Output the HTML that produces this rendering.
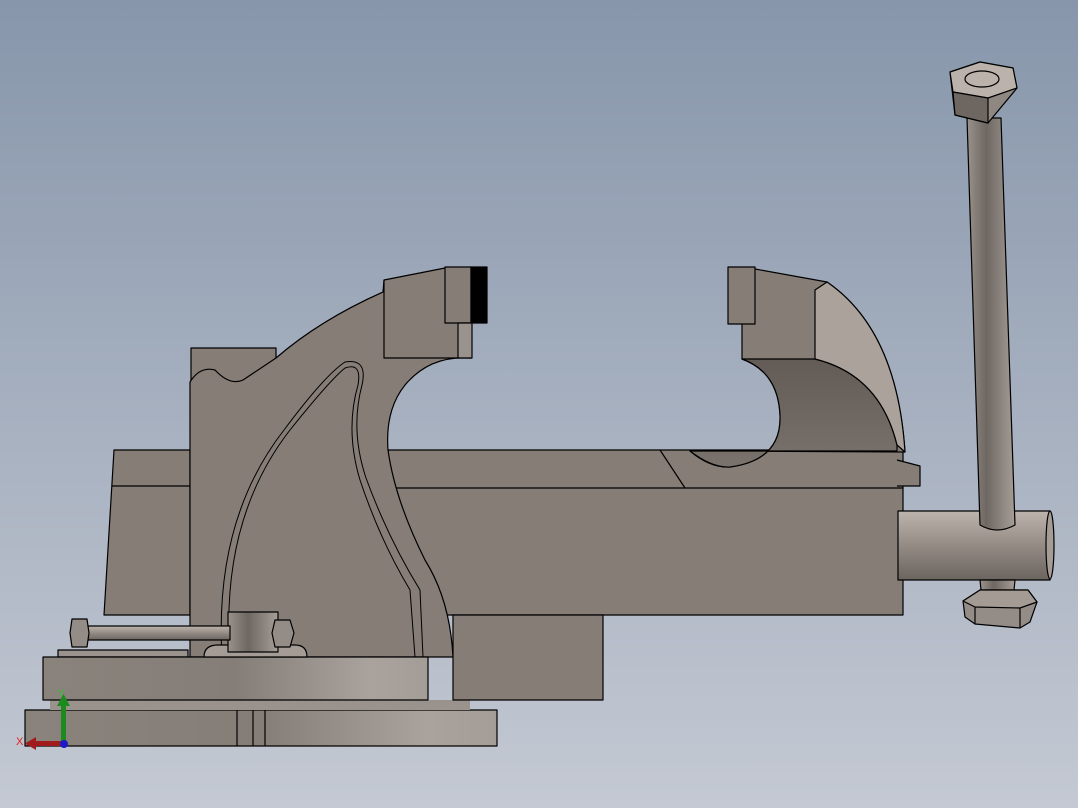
<!DOCTYPE html>
<html><head><style>html,body{margin:0;padding:0;width:1078px;height:808px;overflow:hidden}svg{display:block}</style></head>
<body>
<svg width="1078" height="808" viewBox="0 0 1078 808" xmlns="http://www.w3.org/2000/svg" font-family="Liberation Sans, sans-serif">
<defs>
<linearGradient id="bg" x1="0" y1="0" x2="0" y2="1"><stop offset="0" stop-color="#8796ab"/><stop offset="1" stop-color="#c4c9d3"/></linearGradient>
<linearGradient id="base" x1="0" y1="0" x2="1" y2="0"><stop offset="0" stop-color="#8a837c"/><stop offset="0.5" stop-color="#857e78"/><stop offset="0.85" stop-color="#aaa39d"/><stop offset="1" stop-color="#a49d97"/></linearGradient>
<linearGradient id="cyl" x1="0" y1="0" x2="0" y2="1"><stop offset="0" stop-color="#bdb4ad"/><stop offset="0.5" stop-color="#948b85"/><stop offset="1" stop-color="#6b645f"/></linearGradient>
<linearGradient id="rod" x1="0" y1="0" x2="1" y2="0"><stop offset="0" stop-color="#9a928b"/><stop offset="0.4" stop-color="#6e6762"/><stop offset="1" stop-color="#a69e97"/></linearGradient>
<linearGradient id="cheek" x1="0" y1="0" x2="0" y2="1"><stop offset="0" stop-color="#625b56"/><stop offset="1" stop-color="#7a726c"/></linearGradient>
</defs>
<rect width="1078" height="808" fill="url(#bg)"/>
<g stroke="#000" stroke-width="1.2" stroke-linejoin="round">
<rect x="25" y="710" width="472" height="36" fill="url(#base)"/>
<rect x="50" y="700" width="420" height="10" fill="#9a938d" stroke="none"/>
<line x1="237" y1="710" x2="237" y2="746"/><line x1="253" y1="710" x2="253" y2="746"/><line x1="265" y1="710" x2="265" y2="746"/>
<path d="M114 450 L190 450 L190 615 L104 615 Z" fill="#857d76"/>
<line x1="112" y1="486" x2="190" y2="486"/>
<rect x="388" y="450" width="515" height="165" fill="#857d76"/>
<line x1="388" y1="488" x2="903" y2="488"/>
<path d="M660 450 L685 488" fill="none"/>
<path d="M897 460 L920 466 L920 486 L897 486" fill="#857d76"/>
<rect x="453" y="615" width="150" height="85" fill="#857d76"/>
<path d="M690 451 Q710 468 730 467 Q782 460 780 415 Q778 372 742 359 L742 269 L755 269 L827 282 Q897 330 905 452 Z" fill="#857d76"/>
<path d="M742 359 L815 359 Q880 375 897 445 L897 451 L690 451 Q712 468 730 467 Q782 460 780 415 Q778 372 742 359Z" fill="url(#cheek)"/>
<path d="M815 290 L815 359 Q880 375 897 445 L905 452 Q897 330 827 282 Z" fill="#aaa29b"/>
<rect x="728" y="267" width="27" height="57" fill="#857d76"/>
<rect x="191" y="348" width="85" height="40" fill="#857d76"/>
<path d="M190 382 Q200 366 215 370 Q230 386 243 380 L276 358 Q320 320 383 292 L384 280 L445 268 L471 268 L471 358 Q430 355 405 385 Q385 410 388 450 Q395 500 425 560 Q450 600 453 657 L190 657 Z" fill="#857d76"/>
<path d="M384 280 L384 358 L471 358" fill="none"/>
<path d="M230 657 Q220 520 290 430 Q330 380 345 368 Q362 362 358 385 Q345 430 360 480 Q380 540 410 590 L415 657" fill="none" stroke-width="1"/>
<path d="M222 657 Q214 520 284 430 Q325 375 345 362 Q368 358 362 385 Q350 430 366 478 Q388 538 420 590 L423 657" fill="none" stroke-width="1"/>
<rect x="445" y="267" width="26" height="56" fill="#857d76"/>
<rect x="471" y="267" width="16" height="56" fill="#000"/>
<rect x="458" y="323" width="14" height="35" fill="#9a928c"/>
<rect x="58" y="650" width="130" height="7" fill="#9a928c"/>
<rect x="43" y="657" width="385" height="43" fill="url(#base)"/>
<path d="M204 657 Q204 645 218 645 L295 645 Q307 645 307 657 Z" fill="#a49c95"/>
<rect x="228" y="612" width="50" height="40" fill="url(#rod)"/>
<rect x="86" y="626" width="144" height="14" fill="url(#cyl)"/>
<path d="M72 619 L87 619 L89 633 L87 647 L72 647 L70 633 Z" fill="#948c86"/>
<path d="M275 620 L290 620 L294 633 L290 647 L275 647 L272 633 Z" fill="#948c86"/>
<rect x="898" y="511" width="152" height="69" fill="url(#cyl)"/>
<ellipse cx="1050" cy="545" rx="4" ry="34" fill="#a49c95"/>
<path d="M967 118 L1001 118 L1015 525 Q997 535 980 525 Z" fill="url(#rod)"/>
<path d="M980 580 L1015 580 L1013 600 L982 600 Z" fill="url(#rod)"/>
<path d="M950 72 L980 62 L1013 68 L1017 88 L988 123 L955 115 Z" fill="#8f8781"/>
<path d="M950 72 L980 62 L1013 68 L1017 88 L988 98 L953 92 Z" fill="#bbb2ab"/>
<path d="M953 92 L988 98 L988 123 L955 115 Z" fill="#6d6661"/>
<ellipse cx="982" cy="79" rx="17" ry="8" fill="none"/>
<path d="M963 601 L980 590 L1028 590 L1037 602 L1030 622 L1020 628 L975 624 L965 617 Z" fill="#948c86"/>
<path d="M963 601 L980 590 L1028 590 L1037 602 L1020 608 L975 607 Z" fill="#a39b94"/>
<path d="M975 607 L975 624 M1020 608 L1020 628" fill="none"/>
</g>
<rect x="61" y="698" width="5" height="44" fill="#1c8a1c"/>
<path d="M57 706 L63.5 694 L70 706 Z" fill="#1c8a1c"/>
<rect x="34" y="741" width="30" height="5" fill="#a01c1c"/>
<path d="M36 737 L25 743.5 L36 750 Z" fill="#a01c1c"/>
<circle cx="64" cy="744" r="4" fill="#1a1ac8"/>
<text x="16" y="745" font-size="11" fill="#e02020">X</text>
<text x="58" y="696" font-size="9" fill="#20d020">Y</text>
</svg>
</body></html>
